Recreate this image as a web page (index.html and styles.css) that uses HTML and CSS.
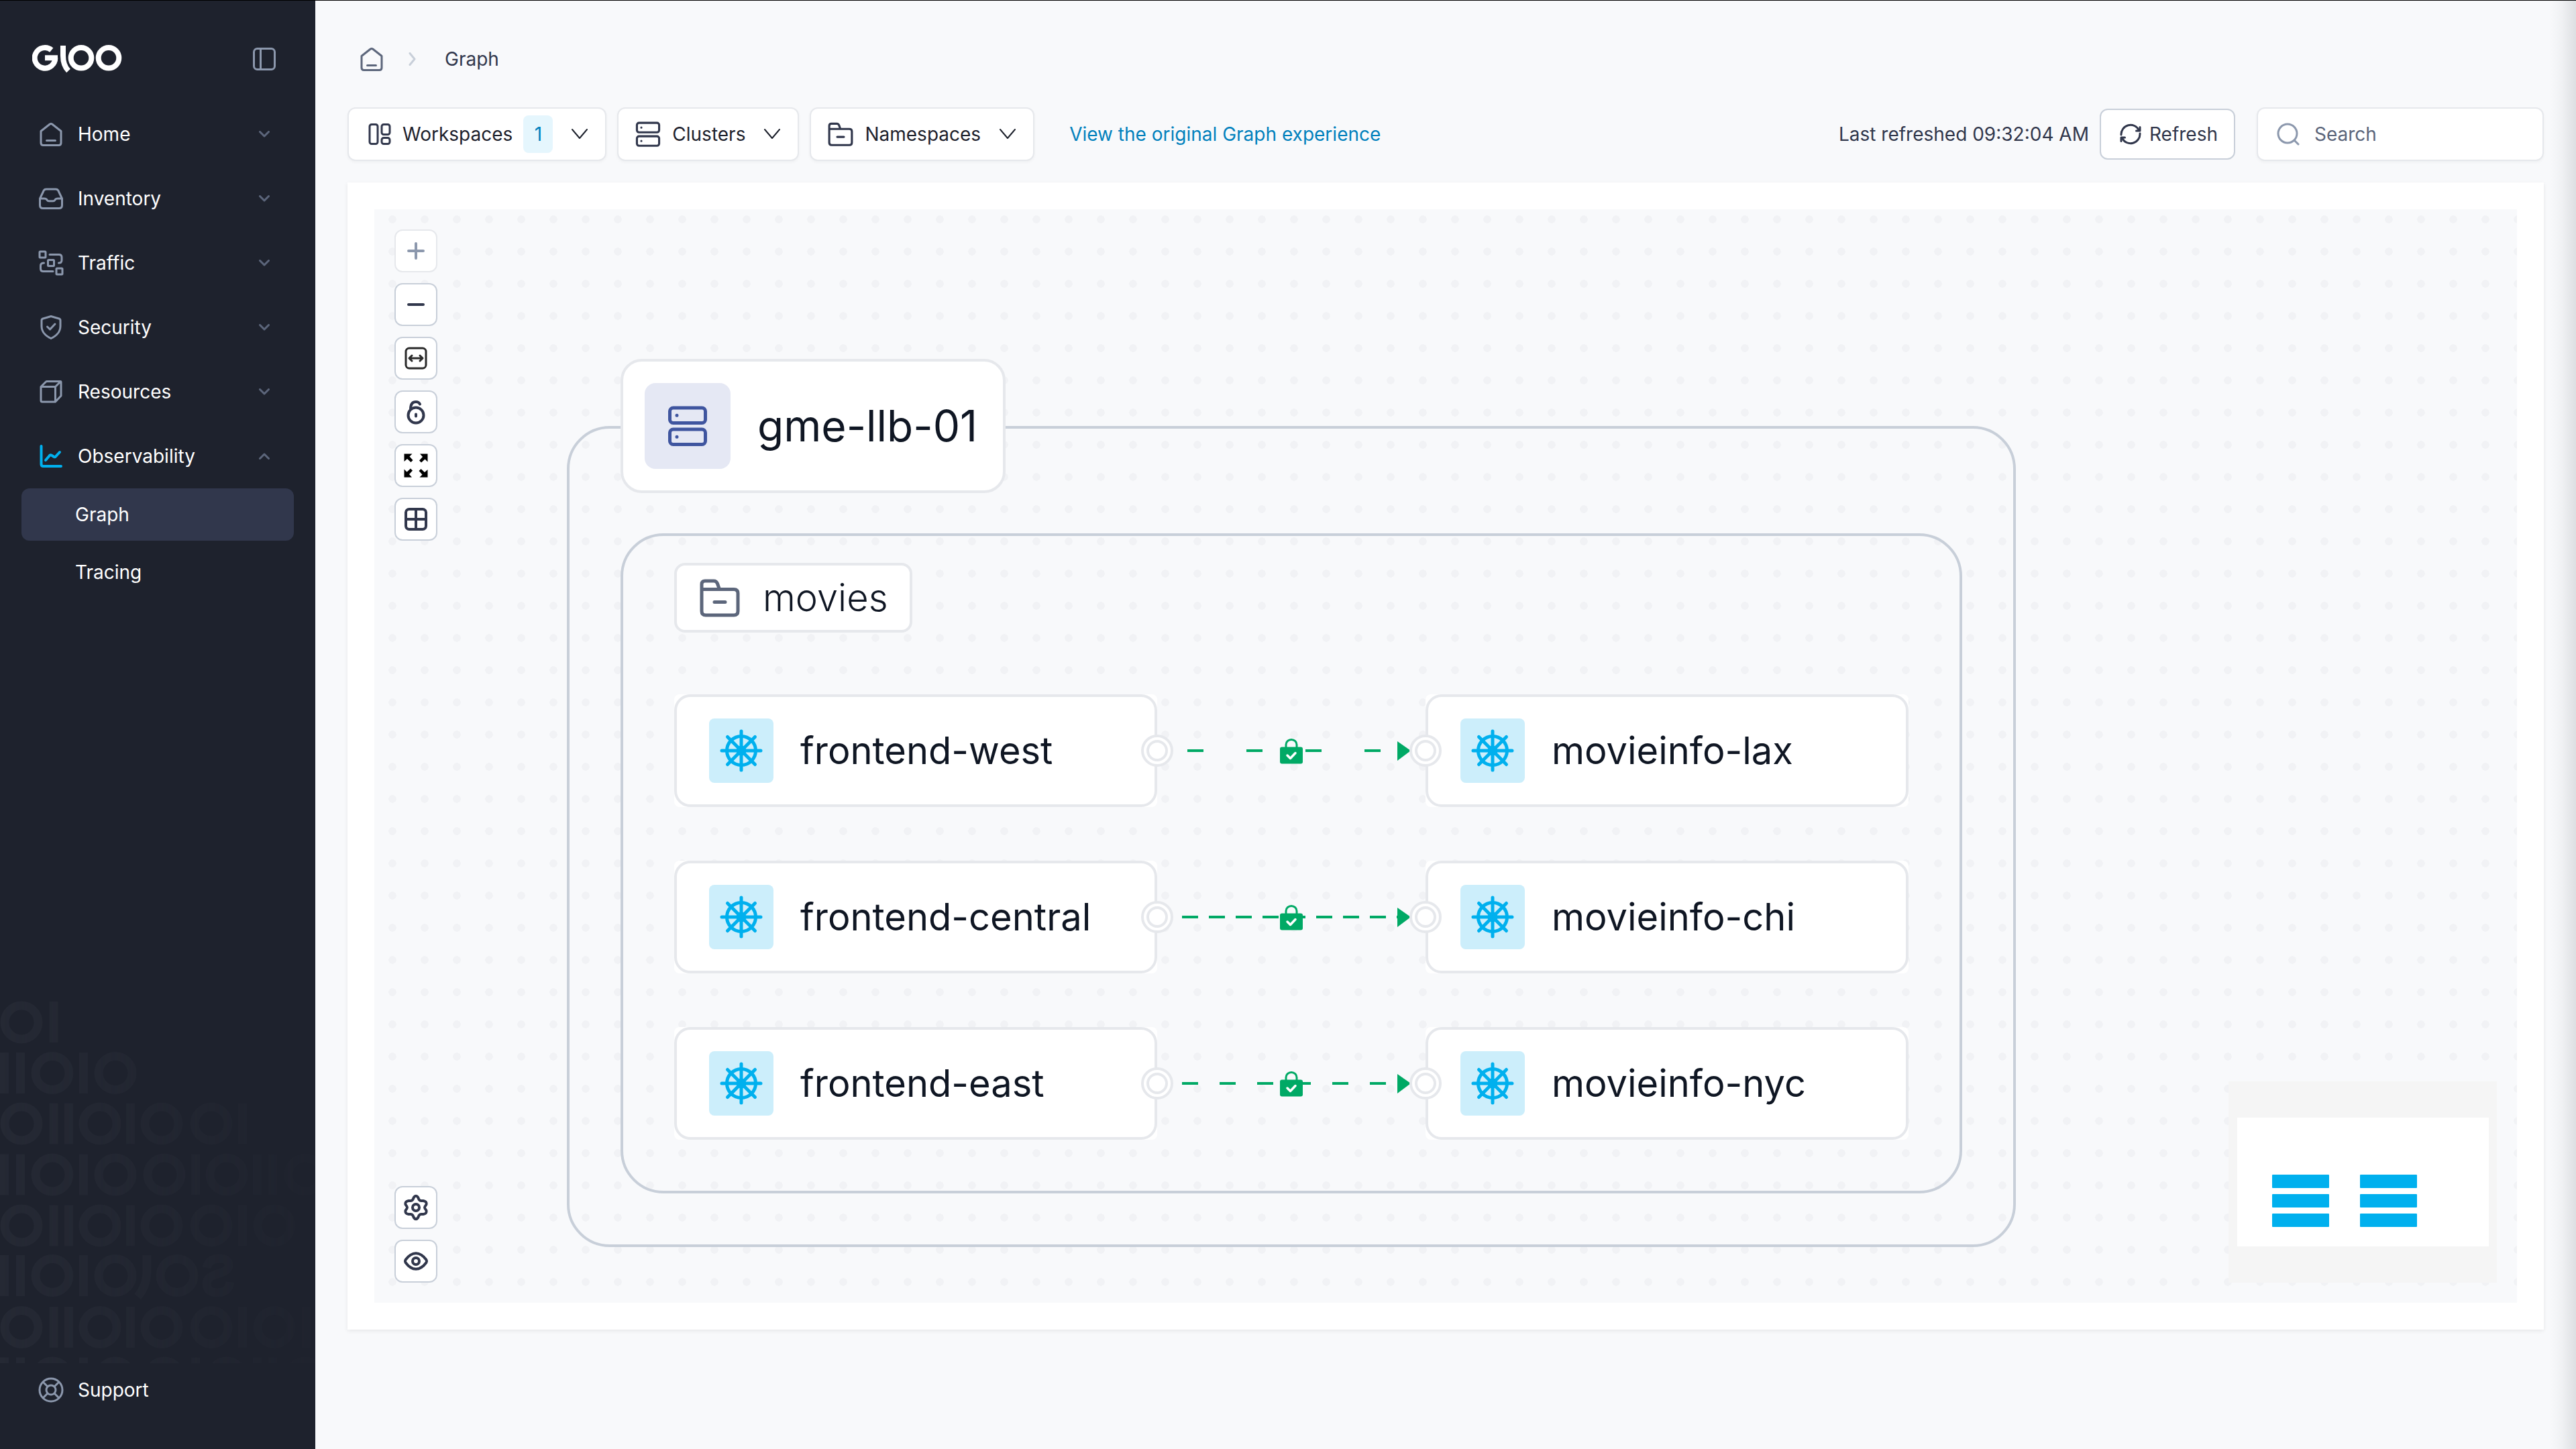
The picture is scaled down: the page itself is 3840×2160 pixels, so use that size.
FILE: index.html
```html
<!DOCTYPE html>
<html lang="en">
<head>
<meta charset="utf-8">
<title>Gloo - Graph</title>
<meta name="viewport" content="width=device-width, initial-scale=1">
<link rel="stylesheet" href="styles.css">
</head>
<body>
<svg class="defs" aria-hidden="true">
  <symbol id="chevron" viewBox="0 0 16 10"><path d="M1.5 1.5 8 8l6.500-6.500"/></symbol>
  <symbol id="caret" viewBox="0 0 24 16"><path d="M1 1l11 13L23 1"/></symbol>
  <symbol id="house" viewBox="0 0 38 38"><path d="M4 14.500 17 4.200q2-1.500 4 0L34 14.500V32q0 3.500-3.500 3.500h-23Q4 35.500 4 32zM12.500 28.500h13"/></symbol>
  <symbol id="servers" viewBox="0 0 64 64"><rect x="5.500" y="5" width="53" height="22.500" rx="5"/><rect x="5.500" y="37" width="53" height="22.500" rx="5"/><path d="M16 16.200v.1M16 48.200v.1"/></symbol>
  <symbol id="folder" viewBox="0 0 64 64"><path d="M5 20V12q0-5 5-5h13q4 0 5.500 4l3 8.500M5 19.500h48q6 0 6 6V52q0 6-6 6H11q-6 0-6-6zM24 38.500h16"/></symbol>
  <symbol id="helm" viewBox="0 0 64 64"><circle cx="32" cy="32" r="21.500"/><path d="M32 3v58M3 32h58M11.500 11.500l41 41M52.500 11.500l-41 41"/><circle class="hub" cx="32" cy="32" r="5"/></symbol>
  <symbol id="lock-check" viewBox="0 0 36 38"><path d="M10 14V9a8 7.500 0 0 1 16 0v5" fill="none" stroke="#00a965" stroke-width="3"/><rect x="1" y="12.500" width="34" height="25" rx="3" fill="#00a965"/><path d="m12 25 4.500 4.500 7.500-8" fill="none" stroke="#fff" stroke-width="3.500" stroke-linecap="round" stroke-linejoin="round"/></symbol>
</svg>

<div class="app">
  <aside class="sidebar">
    <svg class="pattern" viewBox="0 0 470 540" aria-hidden="true">
      <g class="rings">
        <circle cx="32" cy="32" r="25"/>
        <circle cx="78" cy="107.500" r="25"/><circle cx="172" cy="107.500" r="25"/>
        <circle cx="32" cy="183" r="25"/><circle cx="149" cy="183" r="25"/><circle cx="241" cy="183" r="25"/><circle cx="315" cy="183" r="25"/>
        <circle cx="78" cy="259" r="25"/><circle cx="172" cy="259" r="25"/><circle cx="245" cy="259" r="25"/><circle cx="338" cy="259" r="25"/><circle cx="455" cy="259" r="25"/>
        <circle cx="32" cy="335" r="25"/><circle cx="149" cy="335" r="25"/><circle cx="241" cy="335" r="25"/><circle cx="315" cy="335" r="25"/><circle cx="409" cy="335" r="25"/>
        <circle cx="78" cy="409.500" r="25"/><circle cx="172" cy="409.500" r="25"/><circle cx="264" cy="409.500" r="25"/>
        <circle cx="32" cy="486.500" r="25"/><circle cx="149" cy="486.500" r="25"/><circle cx="241" cy="486.500" r="25"/><circle cx="315" cy="486.500" r="25"/><circle cx="409" cy="486.500" r="25"/>
        <circle cx="78" cy="562" r="25"/><circle cx="172" cy="562" r="25"/><circle cx="245" cy="562" r="25"/><circle cx="338" cy="562" r="25"/><circle cx="455" cy="562" r="25"/>
      </g>
      <g class="bars">
        <path d="M80 1v61M6.500 77v61M30.500 77v61M124.500 77v61M80 152.500v61M102.500 152.500v61M194.500 152.500v61M361.500 152.500v61"/>
        <path d="M6.500 228.500v61M30.500 228.500v61M124.500 228.500v61M291.500 228.500v61M383.500 228.500v61M406.500 228.500v61"/>
        <path d="M80 304.500v61M102.500 304.500v61M194.500 304.500v61M361.500 304.500v61"/>
        <path d="M6.500 379v61M30.500 379v61M124.500 379v61M219 379v22q0 24-14 40"/>
        <path d="M80 456v61M102.500 456v61M194.500 456v61M361.500 456v61M456.500 456v61"/>
        <path d="M6.500 531.500v9M30.500 531.500v9M124.500 531.500v9M291.500 531.500v9M383.500 531.500v9M406.500 531.500v9"/>
        <path d="M308 398q3-14 19-14 14 0 14 10 0 8-14 12-19 5-19 15 0 14 16 14 17 0 19-16"/>
      </g>
    </svg>

    <header class="brand">
      <svg class="logo" viewBox="0 0 134 42" role="img" aria-label="Gloo">
        <path d="M28.800 7.600A15.300 15.300 0 1 0 34.300 19.300M19 19.200h19M46 1v15c0 10 2.500 17 8 22.500"/>
        <circle cx="73" cy="19.300" r="15.300"/><circle cx="114" cy="19.300" r="15.300"/>
      </svg>
      <button class="collapse" aria-label="Collapse sidebar">
        <svg viewBox="0 0 34 34"><rect x="1.500" y="1.500" width="31" height="31" rx="5"/><path d="M11.500 2v30"/></svg>
      </button>
    </header>

    <nav class="nav">
      <button class="nav-item"><svg class="nav-icon" viewBox="0 0 38 38"><use href="#house"/></svg><span>Home</span><svg class="chev"><use href="#chevron"/></svg></button>
      <button class="nav-item"><svg class="nav-icon" viewBox="0 0 38 38"><path d="M2.500 19v10q0 4.500 4.500 4.500h24q4.500 0 4.500-4.500V19L30 7.500Q29 5 26 5H12Q9 5 8 7.500zM2.500 19h6.500q3 0 4 2 1 1.800 3 1.800h6q2 0 3-1.800 1-2 4-2h6.500"/></svg><span>Inventory</span><svg class="chev"><use href="#chevron"/></svg></button>
      <button class="nav-item"><svg class="nav-icon" viewBox="0 0 38 38"><rect x="2" y="2" width="9" height="9" rx="1"/><rect x="14.500" y="14.500" width="9" height="9" rx="1"/><rect x="27" y="27" width="9" height="9" rx="1"/><path d="M17 6.500h14q4 0 4 4V15q0 4-4.500 4M8.500 19Q3.500 19 3.500 23v4.500q0 4 4 4H22"/></svg><span>Traffic</span><svg class="chev"><use href="#chevron"/></svg></button>
      <button class="nav-item"><svg class="nav-icon" viewBox="0 0 38 38"><path d="M19 2.500 31 6q2 .6 2 2.600V17c0 9-5 14-14 18.500C10 31 5 26 5 17V8.600Q5 6.600 7 6zM13.500 18l4 4 7.500-8"/></svg><span>Security</span><svg class="chev"><use href="#chevron"/></svg></button>
      <button class="nav-item"><svg class="nav-icon" viewBox="0 0 38 38"><path d="M4 11.500h21.500V34H6q-2 0-2-2zL11 4.500q1-1 2-1h20q1 0 1 1V25l-8.500 9V11.500L33 4"/></svg><span>Resources</span><svg class="chev"><use href="#chevron"/></svg></button>
      <button class="nav-item" aria-expanded="true"><svg class="nav-icon active" viewBox="0 0 38 38"><path d="M4.500 4v27q0 3 3 3H34M11 25l6-7q1.200-1.200 2.500-.5l4 2.500q1.500.8 2.500-.5l6-6.500"/></svg><span>Observability</span><svg class="chev up"><use href="#chevron"/></svg></button>
      <div class="subnav">
        <a class="sub-item current" href="#graph" aria-current="page">Graph</a>
        <a class="sub-item" href="#tracing">Tracing</a>
      </div>
      <a class="nav-item support" href="#support"><svg class="nav-icon" viewBox="0 0 38 38"><circle cx="19" cy="19" r="17"/><circle cx="19" cy="19" r="7"/><path d="m7.500 7.500 6.500 6.500M30.500 7.500 24 14M7.500 30.500 14 24M30.500 30.500 24 24"/></svg><span>Support</span></a>
    </nav>
  </aside>

  <main class="main">
    <nav class="breadcrumb" aria-label="Breadcrumb">
      <a href="#home" aria-label="Home"><svg class="crumb-home"><use href="#house"/></svg></a>
      <svg class="crumb-sep" viewBox="0 0 12 20"><path d="m2 1.500 7 8.500-7 8.500"/></svg>
      <span>Graph</span>
    </nav>

    <div class="toolbar">
      <button class="filter"><svg class="filter-icon" viewBox="0 0 36 36"><rect x="3" y="3.500" width="12" height="29" rx="3"/><rect x="21" y="3.500" width="12" height="15" rx="3"/><rect x="21" y="23.500" width="12" height="9" rx="3"/></svg><span>Workspaces</span><span class="count">1</span><svg class="caret"><use href="#caret"/></svg></button>
      <button class="filter"><svg class="filter-icon wide"><use href="#servers"/></svg><span>Clusters</span><svg class="caret"><use href="#caret"/></svg></button>
      <button class="filter"><svg class="filter-icon wide"><use href="#folder"/></svg><span>Namespaces</span><svg class="caret"><use href="#caret"/></svg></button>
      <a class="legacy" href="#original">View the original Graph experience</a>
      <span class="refreshed">Last refreshed 09:32:04 AM</span>
      <button class="refresh"><svg viewBox="0 0 32 32"><path d="M2 17A14 14 0 0 1 28.500 10M30 15A14 14 0 0 1 3.500 22"/><path d="M30 5.500V11h-5.500M2 26.500V21h5.500"/></svg>Refresh</button>
      <label class="search"><svg viewBox="0 0 34 34"><circle cx="16" cy="16" r="14"/><path d="m26.500 26.500 5.500 5.500"/></svg><input type="search" placeholder="Search" aria-label="Search"></label>
    </div>

    <section class="panel">
      <div class="canvas">
        <div class="cluster"></div>
        <div class="namespace"></div>
        <div class="cluster-title"><span class="cluster-icon"><svg><use href="#servers"/></svg></span>gme-llb-01</div>
        <div class="namespace-title"><svg><use href="#folder"/></svg>movies</div>

        <svg class="edges" viewBox="0 0 400 664" aria-hidden="true">
          <g class="dash"><path d="M45 84H358" stroke-dasharray="24 64"/><path d="M37 332H358" stroke-dasharray="24 16"/><path d="M37 580H358" stroke-dasharray="24 32"/></g>
          <path class="tip" d="M358 70l20 14-20 15zM358 318l20 14-20 15zM358 566l20 14-20 15z"/>
          <use href="#lock-check" x="182" y="66" width="36" height="38"/><use href="#lock-check" x="182" y="314" width="36" height="38"/><use href="#lock-check" x="182" y="562" width="36" height="38"/>
        </svg>

        <div class="node source row-1"><div class="node-body"><span class="node-icon"><svg><use href="#helm"/></svg></span>frontend-west</div><i class="handle"></i></div>
        <div class="node source row-2"><div class="node-body"><span class="node-icon"><svg><use href="#helm"/></svg></span>frontend-central</div><i class="handle"></i></div>
        <div class="node source row-3"><div class="node-body"><span class="node-icon"><svg><use href="#helm"/></svg></span>frontend-east</div><i class="handle"></i></div>
        <div class="node target row-1"><div class="node-body"><span class="node-icon"><svg><use href="#helm"/></svg></span>movieinfo-lax</div><i class="handle"></i></div>
        <div class="node target row-2"><div class="node-body"><span class="node-icon"><svg><use href="#helm"/></svg></span>movieinfo-chi</div><i class="handle"></i></div>
        <div class="node target row-3"><div class="node-body"><span class="node-icon"><svg><use href="#helm"/></svg></span>movieinfo-nyc</div><i class="handle"></i></div>

        <div class="controls top">
          <button disabled aria-label="Zoom in"><svg viewBox="0 0 40 40"><path d="M9 20h22M20 9v22"/></svg></button>
          <button aria-label="Zoom out"><svg viewBox="0 0 40 40"><path d="M9 20h22"/></svg></button>
          <button aria-label="Fit to view"><svg class="fit" viewBox="0 0 40 40"><rect x="5" y="5" width="30" height="30" rx="5"/><path d="M10.500 20h19M14 16l-4 4 4 4M26 16l4 4-4 4"/></svg></button>
          <button aria-label="Lock layout"><svg viewBox="0 0 40 40"><circle cx="20" cy="25" r="11.500"/><path d="M12 16C12 8 15 5 20 5q4.500 0 6 3.500M20 23.500v3"/></svg></button>
          <button aria-label="Full screen"><svg class="solid" viewBox="0 0 40 40"><path id="arrow" d="M2.500 2.500h12l-4 4 5 5.500-3 3-5.500-5-4.500 4z"/><use href="#arrow" transform="rotate(90 20 20)"/><use href="#arrow" transform="rotate(180 20 20)"/><use href="#arrow" transform="rotate(270 20 20)"/></svg></button>
          <button aria-label="Layout"><svg viewBox="0 0 40 40"><rect x="5" y="5" width="30" height="30" rx="5"/><path d="M20 5v30M5 20h30"/></svg></button>
        </div>
        <div class="controls bottom">
          <button aria-label="Settings"><svg viewBox="0 0 40 40"><path d="M16.800 5q3.200-4.500 6.400 0l1.300 3q1.200 2 3.500 2h3q5.500.8 4.500 5.500l-2 3q-.9 1.500 0 3l2 3q1 4.700-4.500 5.500h-3q-2.300 0-3.500 2l-1.300 3q-3.200 4.500-6.400 0l-1.300-3q-1.200-2-3.500-2H9q-5.500-.8-4.500-5.500l2-3q.9-1.500 0-3l-2-3Q3.500 10.800 9 10h3q2.300 0 3.500-2z"/><circle cx="20" cy="20" r="5"/></svg></button>
          <button aria-label="Visibility"><svg viewBox="0 0 40 40"><path d="M4.500 18C14 5 26 5 35.500 18q1.200 2 0 4C26 35 14 35 4.500 22q-1.200-2 0-4z"/><circle cx="20" cy="20" r="5"/></svg></button>
        </div>

        <svg class="minimap" viewBox="0 0 400 300" role="img" aria-label="Graph overview">
          <path fill="#fff" d="M13 54h375v192H13z"/>
          <g fill="#00b0ee"><rect x="65" y="139" width="85" height="20" rx="1"/><rect x="65" y="168" width="85" height="20" rx="1"/><rect x="65" y="197" width="85" height="20" rx="1"/><rect x="196" y="139" width="85" height="20" rx="1"/><rect x="196" y="168" width="85" height="20" rx="1"/><rect x="196" y="197" width="85" height="20" rx="1"/></g>
        </svg>
      </div>
    </section>
  </main>
</div>
</body>
</html>
```
FILE: styles.css
```css
* {
  box-sizing: border-box;
}

body {
  margin: 0;
  background: #f8f9fb;
  color: #1e222d;
  font: 400 28px/40px Inter, "Liberation Sans", sans-serif;
}

button,
input {
  font: inherit;
  color: inherit;
}

button {
  cursor: pointer;
}

a {
  color: inherit;
  text-decoration: none;
}

svg {
  display: block;
  flex: none;
  fill: none;
  stroke: currentColor;
  stroke-width: 3;
  stroke-linecap: round;
  stroke-linejoin: round;
}

.defs {
  position: absolute;
  width: 0;
  height: 0;
}

.app {
  display: flex;
  min-height: 100vh;
  border-top: 1px solid #000;
}

.app::after {
  content: "";
  position: fixed;
  inset: 0 0 0 auto;
  width: 40px;
  background: linear-gradient(90deg, rgb(30 40 45 / 0), rgb(30 40 45 / 4%) 50%, rgb(30 40 45 / 12%));
  pointer-events: none;
}

/* Sidebar */
.sidebar {
  position: relative;
  display: flex;
  flex: none;
  flex-direction: column;
  width: 470px;
  background: #1e222d;
  color: #fff;
}

.pattern {
  position: absolute;
  left: 0;
  bottom: 128px;
  width: 470px;
  height: 540px;
  overflow: hidden;
  color: #252934;
  stroke-width: 13;
  stroke-linecap: butt;
  -webkit-mask-image: linear-gradient(90deg, #000, rgb(0 0 0 / 20%));
  mask-image: linear-gradient(90deg, #000, rgb(0 0 0 / 20%));
}

.brand {
  display: flex;
  align-items: center;
  justify-content: space-between;
  height: 151px;
  padding: 22px 59px 0 48px;
}

.logo {
  width: 134px;
  height: 42px;
  stroke-width: 8;
  stroke-linecap: butt;
}

.collapse {
  padding: 0;
  border: 0;
  background: none;
  color: #8c98ad;
}

.collapse svg {
  width: 34px;
  height: 34px;
}

.nav {
  position: relative;
  display: flex;
  flex: 1;
  flex-direction: column;
  padding-bottom: 40px;
}

.nav-item {
  display: flex;
  align-items: center;
  gap: 21px;
  height: 96px;
  padding: 0 68px 0 57px;
  border: 0;
  background: none;
  text-align: left;
}

.nav-item span {
  flex: 1;
}

.nav-icon {
  width: 38px;
  height: 38px;
  color: #8c98ad;
}

.nav-icon.active {
  color: #00b0ee;
  stroke-width: 4;
}

.chev {
  width: 16px;
  height: 10px;
  color: #5c667b;
}

.chev.up {
  transform: rotate(180deg);
}

.subnav {
  display: flex;
  flex-direction: column;
  gap: 8px;
  padding: 0 32px;
}

.sub-item {
  padding: 19px 80px;
  border-radius: 12px;
}

.sub-item.current {
  background: #31374c;
}

.support {
  margin-top: auto;
}

/* Main column */
.main {
  flex: 1;
  min-width: 0;
  padding: 47px 48px 0;
}

.breadcrumb {
  display: flex;
  align-items: center;
  height: 80px;
  margin-bottom: 32px;
  padding-left: 17px;
  color: #31374c;
}

.crumb-home {
  width: 38px;
  height: 38px;
  color: #5c667b;
}

.crumb-sep {
  width: 12px;
  height: 20px;
  margin: 0 42px 0 36px;
  color: #c8cfd9;
}

.toolbar {
  display: flex;
  align-items: center;
  height: 80px;
  margin-bottom: 32px;
}

.filter {
  display: flex;
  align-items: center;
  height: 80px;
  margin-right: 16px;
  padding: 0 26px 0 28px;
  border: 2px solid #e6e8ec;
  border-radius: 12px;
  background: #fff;
  box-shadow: 0 2px 4px rgb(0 0 0 / 4%);
}

.filter-icon {
  width: 36px;
  height: 36px;
  margin-right: 16px;
  color: #31374c;
}

.filter-icon.wide {
  width: 40px;
  height: 40px;
  margin-left: -4px;
  stroke-width: 5;
}

.count {
  width: 44px;
  margin-left: 16px;
  border-radius: 8px;
  background: #e5f6fd;
  color: #0281bd;
  line-height: 56px;
  text-align: center;
}

.caret {
  width: 24px;
  height: 16px;
  margin-left: 28px;
  stroke-width: 2;
}

.legacy {
  margin-left: 36px;
  color: #0281bd;
}

.refreshed {
  margin-left: auto;
  color: #31374c;
}

.refresh {
  display: flex;
  align-items: center;
  gap: 12px;
  height: 76px;
  margin: 0 32px 0 16px;
  padding: 0 24px 0 28px;
  border: 2px solid #c8cfd9;
  border-radius: 12px;
  background: #fff;
  color: #31374c;
}

.refresh svg {
  width: 32px;
  height: 32px;
}

.search {
  display: flex;
  align-items: center;
  gap: 22px;
  width: 428px;
  height: 80px;
  padding: 0 28px;
  border: 2px solid #e6e8ec;
  border-radius: 12px;
  background: #fff;
  box-shadow: 0 2px 4px rgb(0 0 0 / 4%);
}

.search svg {
  width: 34px;
  height: 34px;
  color: #8c98ad;
}

.search input {
  flex: 1;
  min-width: 0;
  padding: 0;
  border: 0;
  outline: 0;
  background: none;
}

.search input::placeholder {
  color: #5c667b;
  opacity: 1;
}

.panel {
  padding: 40px;
  background: #fff;
  box-shadow: 0 2px 6px rgb(0 0 0 / 8%);
}

/* Graph canvas */
.canvas {
  position: relative;
  height: calc(100vh - 530px);
  min-height: 1200px;
  overflow: hidden;
  background: #f8f9fb radial-gradient(circle, #f1f2f5 5.500px, transparent 6px) 3px -9px / 48px 48px;
}

.cluster,
.namespace {
  position: absolute;
  border: 4px solid #c8cfd9;
  border-radius: 64px;
}

.cluster {
  left: 287px;
  top: 323px;
  width: 2160px;
  height: 1224px;
}

.namespace {
  left: 367px;
  top: 483px;
  width: 2000px;
  height: 984px;
}

.cluster-title,
.namespace-title {
  position: absolute;
  display: flex;
  align-items: center;
  border: 4px solid #e6e8ec;
  background: #fff;
  color: #0f1623;
}

.cluster-title {
  left: 367px;
  top: 223px;
  gap: 40px;
  height: 200px;
  padding: 0 38px 0 32px;
  border-radius: 32px;
  font-size: 64px;
}

.cluster-icon {
  display: grid;
  place-items: center;
  width: 128px;
  height: 128px;
  border-radius: 16px;
  background: #e5e8f4;
  color: #3f559f;
}

.cluster-icon svg,
.node-icon svg {
  width: 64px;
  height: 64px;
  stroke-width: 5;
}

.namespace-title {
  left: 447px;
  top: 527px;
  gap: 32px;
  height: 104px;
  padding: 0 32px;
  border-radius: 16px;
  font-size: 56px;
  font-weight: 300;
}

.namespace-title svg {
  width: 64px;
  height: 64px;
  color: #5c667b;
  stroke-width: 5;
}

.edges {
  position: absolute;
  left: 1167px;
  top: 723px;
  width: 400px;
  height: 664px;
  color: #00a965;
  stroke-linecap: butt;
}

.dash {
  stroke-width: 4;
}

.tip {
  fill: currentColor;
  stroke: none;
}

.edges use {
  stroke: none;
}

.node {
  position: absolute;
  width: 720px;
  border-radius: 8px;
  background: #fff;
}

.node-body {
  display: flex;
  align-items: center;
  gap: 40px;
  height: 168px;
  padding: 0 48px;
  border: 4px solid #e6e8ec;
  border-radius: 24px;
  color: #0f1623;
  font-size: 56px;
}

.node-icon {
  display: grid;
  place-items: center;
  width: 96px;
  height: 96px;
  border-radius: 8px;
  background: #cceefb;
  color: #00b0ee;
}

.hub {
  fill: currentColor;
}

.source {
  left: 447px;
}

.target {
  left: 1567px;
}

.row-1 {
  top: 723px;
}

.row-2 {
  top: 971px;
}

.row-3 {
  top: 1219px;
}

.handle {
  position: absolute;
  top: 60px;
  display: grid;
  place-items: center;
  width: 48px;
  height: 48px;
  border: 4px solid #e6e8ec;
  border-radius: 50%;
  background: #fff;
}

.handle::after {
  content: "";
  width: 24px;
  height: 24px;
  border: 4px solid #e6e8ec;
  border-radius: 50%;
}

.source .handle {
  right: -24px;
}

.target .handle {
  left: -24px;
}

.controls {
  position: absolute;
  left: 30px;
  display: flex;
  flex-direction: column;
  gap: 16px;
}

.controls.top {
  top: 30px;
}

.controls.bottom {
  bottom: 30px;
}

.controls button {
  display: grid;
  place-items: center;
  width: 64px;
  height: 64px;
  padding: 0;
  border: 2px solid #c8cfd9;
  border-radius: 12px;
  background: #fff;
  color: #31374c;
}

.controls button:disabled {
  border-color: #e6e8ec;
  color: #8c98ad;
}

.controls svg {
  width: 40px;
  height: 40px;
  stroke-width: 4;
}

.controls .fit {
  color: #2a2a2a;
  stroke-width: 3;
}

.controls .solid {
  fill: #000;
  stroke: none;
}

.minimap {
  position: absolute;
  right: 30px;
  bottom: 30px;
  width: 400px;
  height: 300px;
  background: #f5f5f5;
  stroke: none;
}
```
